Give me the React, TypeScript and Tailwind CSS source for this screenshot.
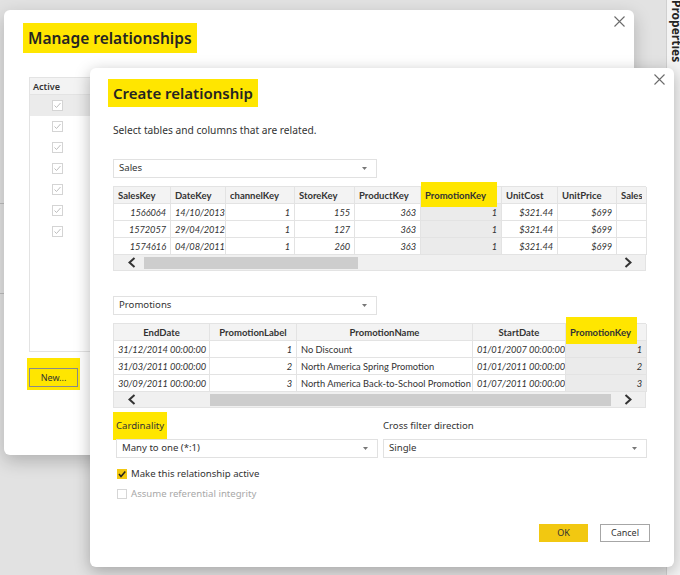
import React from "react";

interface Col {
    name: string;
    w: string;
    vals: string[];
    sel?: boolean;
    mark?: string;
    head?: string;
    cell?: string;
}

const salesCols: Col[] = [
    { name: "SalesKey", w: "w-[57px]", vals: ["1566064", "1572057", "1574616"] },
    { name: "DateKey", w: "w-[55px]", vals: ["14/10/2013", "29/04/2012", "04/08/2011"] },
    { name: "channelKey", w: "w-[69px]", vals: ["1", "1", "1"] },
    { name: "StoreKey", w: "w-[60px]", vals: ["155", "127", "260"] },
    { name: "ProductKey", w: "w-[66px]", vals: ["363", "363", "363"] },
    { name: "PromotionKey", w: "w-[81px]", vals: ["1", "1", "1"], sel: true, mark: "-top-[5px] -bottom-[4px] left-0 right-[4px]" },
    { name: "UnitCost", w: "w-[56px]", vals: ["$321.44", "$321.44", "$321.44"] },
    { name: "UnitPrice", w: "w-[59px]", vals: ["$699", "$699", "$699"] },
    { name: "SalesQuantity", w: "w-[30px]", vals: ["", "", ""] },
];

const promoCols: Col[] = [
    { name: "EndDate", w: "w-[96px]", vals: ["31/12/2014 00:00:00", "31/03/2011 00:00:00", "30/09/2011 00:00:00"], head: "text-center" },
    { name: "PromotionLabel", w: "w-[87px]", vals: ["1", "2", "3"], head: "text-center" },
    { name: "PromotionName", w: "w-[176px]", vals: ["No Discount", "North America Spring Promotion", "North America Back-to-School Promotion"], head: "text-center", cell: "not-italic text-left" },
    { name: "StartDate", w: "w-[93px]", vals: ["01/01/2007 00:00:00", "01/01/2011 00:00:00", "01/07/2011 00:00:00"], head: "text-center" },
    { name: "PromotionKey", w: "w-[81px]", vals: ["1", "2", "3"], sel: true, mark: "-top-[7px] -bottom-[4px] left-0 right-[9px]" },
];

const Chevron = ({ dir }: { dir: "l" | "r" }) => (
    <svg width="8" height="11" viewBox="0 0 8 11">
        <polyline
            points={dir === "l" ? "6.5,1 1.5,5.5 6.5,10" : "1.5,1 6.5,5.5 1.5,10"}
            fill="none"
            stroke="#333"
            strokeWidth="2"
        />
    </svg>
);

const Caret = () => (
    <svg width="5" height="3" viewBox="0 0 5 3">
        <polygon points="0,0 5,0 2.5,3" fill="#777" />
    </svg>
);

const CloseX = () => (
    <svg width="11" height="11" viewBox="0 0 11 11">
        <path d="M0.5 0.5 L10.5 10.5 M10.5 0.5 L0.5 10.5" stroke="#6b6b6b" strokeWidth="1.1" />
    </svg>
);

const Dropdown: React.FC<{ label: string; w: string }> = ({ label, w }) => (
    <div className={`${w} h-[19px] border border-[#e1e1e1] bg-white flex items-center justify-between pl-[5px] pr-[9px] text-[9.6px] text-[#333]`}>
        <span>{label}</span>
        <Caret />
    </div>
);

const DataTable: React.FC<{ cols: Col[]; thumb: string }> = ({ cols, thumb }) => (
    <div className="w-[533px] border border-[#e3e3e3] font-['Lato',sans-serif] text-[#333]">
        <div className="flex">
            {cols.map((c) => (
                <div
                    key={c.name}
                    className={`${c.w} ${c.head ?? "text-left"} relative shrink-0 h-[17px] leading-[17px] px-[4px] bg-[#f3f3f3] border-r border-b border-[#e3e3e3] text-[9.5px] font-bold whitespace-nowrap overflow-visible`}
                >
                    {c.mark && <span className={`absolute ${c.mark} bg-[#ffe600] z-[1]`} />}
                    <span className={`relative z-[2] block ${c.mark ? "" : "overflow-hidden"}`}>{c.name}</span>
                </div>
            ))}
        </div>
        {[0, 1, 2].map((r) => (
            <div key={r} className="flex">
                {cols.map((c) => (
                    <div
                        key={c.name}
                        className={`${c.w} ${c.sel ? "bg-[#ebebeb]" : "bg-white"} ${c.cell ?? "italic text-right tracking-[-0.1px]"} shrink-0 h-[17px] leading-[17px] px-[4px] border-r border-b border-[#e3e3e3] text-[9.3px] whitespace-nowrap overflow-hidden`}
                    >
                        {c.vals[r]}
                    </div>
                ))}
            </div>
        ))}
        <div className="flex items-center h-[15px] bg-[#f0f0f0]">
            <div className="w-[30px] flex justify-center pl-[6px]">
                <Chevron dir="l" />
            </div>
            <div className={`${thumb} h-[12px] bg-[#cdcdcd]`} />
            <div className="flex-1" />
            <div className="w-[34px] flex justify-center">
                <Chevron dir="r" />
            </div>
        </div>
    </div>
);

const ActiveCheck = () => (
    <svg width="11" height="11" viewBox="0 0 11 11">
        <rect x="0.5" y="0.5" width="10" height="10" fill="white" stroke="#d4d4d4" />
        <polyline points="2.5,5.5 4.5,7.5 8.5,3" fill="none" stroke="#bdbdbd" strokeWidth="1" />
    </svg>
);

const ManageDialog = () => (
    <div className="absolute left-[4px] top-[10px] w-[630px] h-[445px] bg-white rounded-[6px] shadow-[0_6px_18px_rgba(0,0,0,0.22)] pl-[19px] pt-[13px]">
        <div className="absolute right-[9px] top-[6px]">
            <CloseX />
        </div>
        <div className="inline-block bg-[#ffe600] h-[30px] px-[5px] leading-[30px] text-[15.5px] font-semibold text-[#252423]">
            Manage relationships
        </div>
        <div className="ml-[6px] mt-[24px] w-[560px] h-[275px] border border-[#e3e3e3] flex flex-col">
            <div className="h-[17px] bg-[#f3f3f3] border-b border-[#e3e3e3] flex">
                <div className="w-[57px] pl-[3px] text-[9px] leading-[17px] font-semibold text-[#333]">Active</div>
            </div>
            {[0, 1, 2, 3, 4, 5, 6].map((i) => (
                <div key={i} className={`h-[21px] flex ${i === 0 ? "bg-[#ebebeb]" : "bg-white"}`}>
                    <div className="w-[55px] flex items-center justify-center">
                        <ActiveCheck />
                    </div>
                </div>
            ))}
        </div>
        <div className="ml-[4px] mt-[6px] inline-block bg-[#ffe600] pt-[10px] pb-[3px] px-[2px]">
            <div className="w-[49px] h-[19px] border border-[#8a8a8a] flex items-center justify-center text-[9px] text-[#333]">
                New...
            </div>
        </div>
    </div>
);

const CreateDialog = () => (
    <div className="absolute left-[90px] top-[68px] w-[584px] h-[499px] bg-white rounded-[6px] shadow-[0_4px_16px_rgba(0,0,0,0.28)] pl-[23px] pt-[11px] flex flex-col">
        <div className="absolute right-[9px] top-[6px]">
            <CloseX />
        </div>
        <div className="-ml-[5px] self-start bg-[#ffe600] h-[28px] px-[5px] leading-[28px] text-[15px] font-semibold text-[#252423]">
            Create relationship
        </div>
        <p className="mt-[15px] text-[10.2px] leading-[16px] text-[#333]">Select tables and columns that are related.</p>
        <div className="mt-[21px]">
            <Dropdown label="Sales" w="w-[264px]" />
        </div>
        <div className="mt-[8px]">
            <DataTable cols={salesCols} thumb="w-[214px]" />
        </div>
        <div className="mt-[25px]">
            <Dropdown label="Promotions" w="w-[264px]" />
        </div>
        <div className="mt-[8px]">
            <DataTable cols={promoCols} thumb="ml-[66px] w-[407px]" />
        </div>
        <div className="mt-[4px] flex h-[28px] items-center text-[9.6px] text-[#333]">
            <div className="w-[270px]">
                <span className="inline-block bg-[#ffe600] h-[28px] leading-[28px] px-[3px]">Cardinality</span>
            </div>
            <span>Cross filter direction</span>
        </div>
        <div className="-mt-[1px] flex">
            <div className="ml-[3px] w-[267px]">
                <Dropdown label="Many to one (*:1)" w="w-[262px]" />
            </div>
            <Dropdown label="Single" w="w-[264px]" />
        </div>
        <div className="mt-[9px] ml-[4px] flex items-center gap-[4px] h-[14px] text-[9.6px] text-[#333]">
            <svg width="10" height="10" viewBox="0 0 10 10">
                <rect width="10" height="10" fill="#f2c811" />
                <polyline points="2,5 4,7.5 8.3,2.5" fill="none" stroke="#222" strokeWidth="1.5" />
            </svg>
            <span>Make this relationship active</span>
        </div>
        <div className="mt-[6px] ml-[4px] flex items-center gap-[4px] h-[14px] text-[9.6px] text-[#a8a8a8]">
            <div className="w-[10px] h-[10px] border border-[#d6d6d6]" />
            <span>Assume referential integrity</span>
        </div>
        <div className="mt-[23px] flex justify-end gap-[12px] pr-[24px] text-[9px] text-[#333]">
            <div className="w-[49px] h-[18px] bg-[#f2c811] flex items-center justify-center">OK</div>
            <div className="w-[50px] h-[18px] border border-[#a6a6a6] bg-white flex items-center justify-center">Cancel</div>
        </div>
    </div>
);

export default function App() {
    return (
        <main className="relative w-[680px] h-[575px] overflow-hidden bg-[#e2e2e2] font-['Segoe_UI','Noto_Sans',sans-serif]">
            <div className="absolute left-0 top-[203px] w-[6px] border-t border-[#bdbdbd]" />
            <div className="absolute left-0 top-[293px] w-[6px] border-t border-[#bdbdbd]" />
            <div className="absolute right-0 top-0 w-[14px] h-full bg-[#f4f4f4] border-l border-[#d0d0d0]">
                <div className="absolute left-[3px] top-0 origin-top-left translate-x-[12px] rotate-90 whitespace-nowrap text-[12px] font-bold text-[#252423] leading-[12px]">
                    Properties
                </div>
            </div>
            <ManageDialog />
            <CreateDialog />
        </main>
    );
}
